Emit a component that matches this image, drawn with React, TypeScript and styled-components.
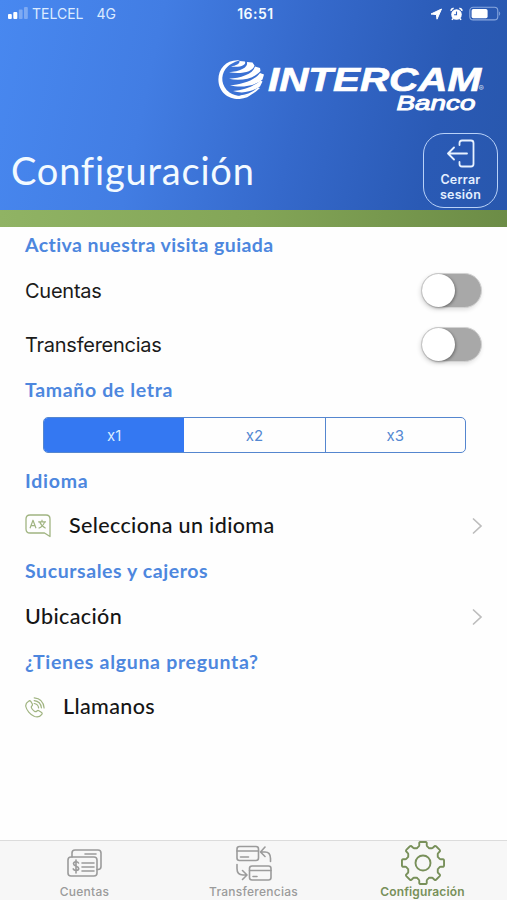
import React from "react";
import styled, { createGlobalStyle } from "styled-components";

const GlobalStyle = createGlobalStyle`
  * { box-sizing: border-box; }
  body { margin: 0; background: #fefefe; }
`;

const lato = `Lato, "Open Sans", sans-serif`;
const inter = `Inter, Roboto, sans-serif`;

const Screen = styled.div`
  width: 507px;
  height: 900px;
  display: flex;
  flex-direction: column;
  overflow: hidden;
  background: #fefefe;
  font-family: ${inter};
`;

const Header = styled.header`
  height: 210px;
  display: flex;
  flex-direction: column;
  color: #f3faff;
  background: linear-gradient(102deg, #4888f0 0%, #427de3 30%, #3569cb 58%, #2a5ab5 84%, #2857ad 100%);
`;

const StatusBar = styled.div`
  height: 27px;
  padding: 0 6px 0 8px;
  display: grid;
  grid-template-columns: 1fr auto 1fr;
  align-items: center;
  font-size: 14px;
  line-height: 27px;
`;

const StatusGroup = styled.div<{ $end?: boolean }>`
  display: flex;
  align-items: center;
  justify-content: ${(p) => (p.$end ? "flex-end" : "flex-start")};
`;

const Carrier = styled.span`
  margin-left: 4px;
  letter-spacing: 0;
  color: #dcebff;
`;

const Network = styled(Carrier)`
  margin-left: 13px;
`;

const Time = styled.span`
  font-weight: 600;
  letter-spacing: 0.5px;
  margin-left: 2px;
`;

const LogoRow = styled.div`
  height: 93px;
  padding: 29px 20px 0 0;
  display: flex;
  justify-content: flex-end;
`;

const TitleRow = styled.div`
  flex: 1;
  display: flex;
  justify-content: space-between;
  padding: 13px 9px 0 11px;
`;

const Title = styled.h1`
  margin: 15px 0 0;
  font: 400 38px/44px ${lato};
  letter-spacing: 0.8px;
`;

const Logout = styled.button`
  width: 75px;
  height: 75px;
  padding: 5px 0 0;
  display: flex;
  flex-direction: column;
  align-items: center;
  gap: 3px;
  border: 1.5px solid #b8d1f8;
  border-radius: 21px;
  background: transparent;
  color: #e4efff;
  font: 600 12.5px/15px ${inter};
  letter-spacing: 0.25px;
`;

const Accent = styled.div`
  height: 17px;
  background: linear-gradient(90deg, #90b364, #83a557 50%, #6c8c46);
`;

const Main = styled.main`
  flex: 1;
  padding: 0 24px 0 25px;
`;

const Heading = styled.h2<{ $spacing: number }>`
  margin: 0;
  height: 36.5px;
  font: 700 19.5px/35px ${lato};
  letter-spacing: ${(p) => p.$spacing}px;
  color: #4d87de;
`;

const Row = styled.div`
  height: 54px;
  display: flex;
  align-items: center;
  justify-content: space-between;
`;

const RowLead = styled.div<{ $gap: number }>`
  display: flex;
  align-items: center;
  gap: ${(p) => p.$gap}px;
`;

const PlainLabel = styled.span`
  font: 400 20px/24px ${inter};
  letter-spacing: -0.25px;
  color: #1b1b1b;
`;

const LinkLabel = styled.span`
  margin-top: -2px;
  font: 500 21.5px/26px ${lato};
  letter-spacing: 0.36px;
  color: #151515;
`;

const Switch = styled.div`
  width: 61px;
  height: 35px;
  margin-right: 1px;
  padding: 1px;
  display: flex;
  border-radius: 18px;
  background: #a8a8a8;
  border: 1px solid #d2d2d2;
  box-shadow: -1px 2px 4px rgba(0, 0, 0, 0.12);
`;

const Knob = styled.div`
  width: 33px;
  height: 33px;
  margin: -1px 0 0 -1px;
  border-radius: 50%;
  background: #fff;
  box-shadow: 1px 1px 3px rgba(0, 0, 0, 0.35);
`;

const SegmentArea = styled.div`
  height: 54.5px;
  padding: 9px 17px 0 18px;
`;

const Segmented = styled.div`
  height: 36px;
  display: grid;
  grid-template-columns: repeat(3, 1fr);
  border: 1px solid #5586cf;
  border-radius: 5px;
  overflow: hidden;
`;

const Segment = styled.div<{ $active?: boolean }>`
  display: flex;
  align-items: center;
  justify-content: center;
  padding-top: 2px;
  font: 400 15px/20px ${inter};
  color: ${(p) => (p.$active ? "#d9edff" : "#5488d2")};
  background: ${(p) => (p.$active ? "#3478f2" : "transparent")};
  & + & + & { border-left: 1px solid #5586cf; }
`;

const TabBar = styled.nav`
  height: 60px;
  display: grid;
  grid-template-columns: repeat(3, 1fr);
  background: #f7f7f7;
  border-top: 1px solid #dcdcdc;
`;

const Tab = styled.div<{ $active?: boolean }>`
  display: flex;
  flex-direction: column;
  align-items: center;
  color: ${(p) => (p.$active ? "#78905a" : "#9b9b9b")};
  font: ${(p) => (p.$active ? 600 : 500)} 12px/14px ${inter};
  letter-spacing: ${(p) => (p.$active ? 0.15 : 0.25)}px;
`;

const TabIcon = styled.div`
  height: 44px;
  display: flex;
  align-items: center;
`;

const Signal = () => (
  <svg width="20" height="13" viewBox="0 0 20 13" fill="#fff">
    <rect x="0" y="7" width="3.8" height="5" rx="1" />
    <rect x="5.3" y="5" width="4" height="7" rx="1" />
    <rect x="10.8" y="2.5" width="3.8" height="9.5" rx="1" opacity=".3" />
    <rect x="16" y="0" width="3.8" height="12" rx="1" opacity=".3" />
  </svg>
);

const StatusIcons = () => (
  <svg width="72" height="16" viewBox="0 0 72 16">
    <path d="M2 8 12.500 3 8 13.200 7.400 8.600Z" fill="#fff" stroke="#fff" strokeWidth="1" strokeLinejoin="round" />
    <circle cx="27.500" cy="8.500" r="5.300" fill="#fff" />
    <path d="M22.200 5a2 2 0 0 1 2.500-2.400M30.300 2.600a2 2 0 0 1 2.500 2.400M24 12.500l-1 1.400M31 12.500l1 1.400" fill="none" stroke="#fff" strokeWidth="1.600" />
    <path d="M27.500 5.400v3.400h-2.400" fill="none" stroke="#2f61bf" strokeWidth="1.1" />
    <rect x="40.800" y="1.300" width="28" height="12.600" rx="3.400" fill="none" stroke="#89a8df" strokeWidth="1.1" />
    <rect x="42.600" y="3" width="16" height="9.200" rx="1.700" fill="#fff" />
    <path d="M70.200 5.500v4.200c1.300-.5 1.300-3.700 0-4.200Z" fill="#89a8df" />
  </svg>
);

const Logo = () => (
  <svg width="269" height="62" viewBox="0 0 269 62" fill="#fff">
    <path d="M22 4.500C9 3 .4 12.500 .4 23.500.4 36.500 11 43.500 21.500 43 27 42.500 32 40.500 35 37 27 41 18 41 11.500 36.500 3 30 2.500 20 7.500 13 11 8.500 15.500 6 22 4.500Z" />
    <path d="M13 10.500C18 9.500 22 8 21.500 5L27 5.500C28.500 9.500 22 11.500 13 10.500Z" />
    <path d="M11 16.300C21 15.500 30.500 12 29 6L34.500 6.500 36.500 9.500C35 16 23 18.500 11 16.300Z" />
    <path d="M11 22.800C22 22 35 18.500 37 10.500L42 12 42.500 15C36 23 22 25.500 11 22.800Z" />
    <path d="M12 29.300C23 28.500 36 25 42 17L46 18.500 44.500 23.500C36 30.500 22 32 12 29.300Z" />
    <path d="M15 35C25 34.500 35 31 42.500 24.500L44.500 25.500 42 30.500C34 36 24 38 15 35Z" />
    <path d="M21 39.600C29 38.500 35 36 40 31.500L42 32 38 35.500C33 39.500 27 41 21 39.600Z" />
    <text x="50" y="34.500" fontFamily="'Liberation Sans', sans-serif" fontWeight="700" fontStyle="italic" fontSize="32.500" textLength="213" lengthAdjust="spacingAndGlyphs" stroke="#fff" strokeWidth=".7">INTERCAM</text>
    <text x="178.500" y="54" fontFamily="'Liberation Sans', sans-serif" fontWeight="400" fontStyle="italic" fontSize="20" textLength="79" lengthAdjust="spacingAndGlyphs" stroke="#fff" strokeWidth=".9">Banco</text>
    <text x="260.500" y="35" fontFamily="Inter, sans-serif" fontSize="8" opacity=".75">®</text>
  </svg>
);

const ExitIcon = () => (
  <svg width="28" height="30" viewBox="0 0 28 30" fill="none" stroke="#e8f2ff" strokeWidth="1.8" strokeLinecap="round" strokeLinejoin="round">
    <path d="M12.500 6V4q0-2.500 2.500-2.500h9q2.500 0 2.500 2.500v21q0 2.500-2.500 2.500H15q-2.500 0-2.500-2.500v-2M1 14.500h19M7 8.500l-6 6 6 6" />
  </svg>
);

const Chevron = () => (
  <svg width="11" height="18" viewBox="0 0 11 18" fill="none" stroke="#bdbdbd" strokeWidth="1.700" strokeLinecap="round">
    <path d="m1.500 2 7.500 7-7.500 7" />
  </svg>
);

const LanguageIcon = () => (
  <svg width="26" height="24" viewBox="0 0 26 24" fill="none" stroke="#a0b481" strokeWidth="1.300" strokeLinejoin="round">
    <path d="M5 1h16q4 0 4 4v17.500L19.500 19H5q-4 0-4-4V5q0-4 4-4Z" />
    <path d="M5 14.200 8 6.200l3 8M6 11.600h4M13.200 7.800h7.800M17 5.800v2M19.600 7.800q-1.300 4.500-6 6.500M14.600 7.800q1.800 4.500 6 6.500" strokeWidth="1.200" />
  </svg>
);

const PhoneIcon = () => (
  <svg width="20" height="21" viewBox="0 0 20 21" fill="none" stroke="#a0b481" strokeWidth="1.200" strokeLinecap="round" strokeLinejoin="round">
    <path d="M3.600 4.200q1.200-1 2.200.2l1.400 2.400q.7 1.400-.4 2.200-1.200 1 .3 3 1.500 2 2.900 2.600 1 .3 1.900-.6.900-1 2-.3l2.700 1.800q1 .8.200 1.800-2.600 3.700-7.300 2.200C5 17.700 1.500 13 .8 9.500.4 7 1.500 5.500 3.600 4.200Z" />
    <path d="M9.200.8q9 .7 9.900 10.200M9.200 3.600q6.500.7 7.200 7.200M9.200 6.500q3.900.5 4.400 4.300" />
  </svg>
);

const AccountsIcon = () => (
  <svg width="35" height="28" viewBox="0 0 35 28" fill="none" stroke="currentColor" strokeWidth="1.600" strokeLinecap="round" strokeLinejoin="round">
    <rect x="1" y="8" width="29" height="19" rx="3" />
    <path d="M5 8V4q0-3 3-3h23q3 0 3 3v13.500q0 3-3 3h-1M18 5h11M15 14h12M15 18h12M15 22h12M11.500 14c-1-2-5-1.500-5 .8 0 3 5.200 1.700 5.200 4.600 0 2.500-4.500 2.800-5.500.5M9 11v13" />
  </svg>
);

const TransfersIcon = () => (
  <svg width="36" height="36" viewBox="0 0 36 36" fill="none" stroke="currentColor" strokeWidth="1.600" strokeLinecap="round" strokeLinejoin="round">
    <rect x="1" y="1.500" width="21.500" height="14" rx="2.500" />
    <rect x="13.500" y="21" width="21.500" height="14" rx="2.500" />
    <path d="M1 6h21.500M4.500 12h8M13.500 25.500H35M17 31.500h4M34.500 16.500v-3Q34.500 7 29 7h-4M29 2l-4.500 5 4.500 4.500M1 19.500v4Q1 30 7 30h4M6.500 25.500l4.500 4.500-4.500 4.500" />
  </svg>
);

const polar = (radius: number, degrees: number) => {
  const a = (degrees * Math.PI) / 180;
  return `${(22 + radius * Math.sin(a)).toFixed(2)} ${(22 - radius * Math.cos(a)).toFixed(2)}`;
};

const gearPath =
  Array.from({ length: 8 }, (_, i) => {
    const c = i * 45;
    return `${i ? "L" : "M"}${polar(17.2, c - 14)}Q${polar(17.4, c - 12)} ${polar(18.6, c - 11.5)}L${polar(19.6, c - 11)}Q${polar(21.2, c - 11)} ${polar(21.2, c - 7)}L${polar(21.2, c + 7)}Q${polar(21.2, c + 11)} ${polar(19.6, c + 11)}L${polar(18.6, c + 11.5)}Q${polar(17.4, c + 12)} ${polar(17.2, c + 14)}L${polar(16.3, c + 20)}Q${polar(15.6, c + 22.5)} ${polar(16.3, c + 25)}`;
  }).join("") + "Z";

const GearIcon = () => (
  <svg width="44" height="44" viewBox="0 0 44 44" fill="none" stroke="currentColor" strokeWidth="1.900" strokeLinejoin="round">
    <path d={gearPath} />
    <circle cx="22" cy="22" r="7.500" />
  </svg>
);

const Toggle = () => (
  <Switch role="switch" aria-checked={false}>
    <Knob />
  </Switch>
);

export default function App() {
  return (
    <Screen>
      <GlobalStyle />
      <Header>
        <StatusBar>
          <StatusGroup>
            <Signal />
            <Carrier>TELCEL</Carrier>
            <Network>4G</Network>
          </StatusGroup>
          <Time>16:51</Time>
          <StatusGroup $end>
            <StatusIcons />
          </StatusGroup>
        </StatusBar>
        <LogoRow>
          <Logo />
        </LogoRow>
        <TitleRow>
          <Title>Configuración</Title>
          <Logout>
            <ExitIcon />
            <span>Cerrar<br />sesión</span>
          </Logout>
        </TitleRow>
      </Header>
      <Accent />
      <Main>
        <Heading $spacing={0.42}>Activa nuestra visita guiada</Heading>
        <Row>
          <PlainLabel>Cuentas</PlainLabel>
          <Toggle />
        </Row>
        <Row>
          <PlainLabel>Transferencias</PlainLabel>
          <Toggle />
        </Row>
        <Heading $spacing={0.65}>Tamaño de letra</Heading>
        <SegmentArea>
          <Segmented>
            <Segment $active>x1</Segment>
            <Segment>x2</Segment>
            <Segment>x3</Segment>
          </Segmented>
        </SegmentArea>
        <Heading $spacing={0.75}>Idioma</Heading>
        <Row>
          <RowLead $gap={18}>
            <LanguageIcon />
            <LinkLabel>Selecciona un idioma</LinkLabel>
          </RowLead>
          <Chevron />
        </Row>
        <Heading $spacing={0.58}>Sucursales y cajeros</Heading>
        <Row>
          <LinkLabel>Ubicación</LinkLabel>
          <Chevron />
        </Row>
        <Heading $spacing={0.7}>¿Tienes alguna pregunta?</Heading>
        <Row>
          <RowLead $gap={18}>
            <PhoneIcon />
            <LinkLabel>Llamanos</LinkLabel>
          </RowLead>
        </Row>
      </Main>
      <TabBar>
        <Tab>
          <TabIcon><AccountsIcon /></TabIcon>
          Cuentas
        </Tab>
        <Tab>
          <TabIcon><TransfersIcon /></TabIcon>
          Transferencias
        </Tab>
        <Tab $active>
          <TabIcon><GearIcon /></TabIcon>
          Configuración
        </Tab>
      </TabBar>
    </Screen>
  );
}
